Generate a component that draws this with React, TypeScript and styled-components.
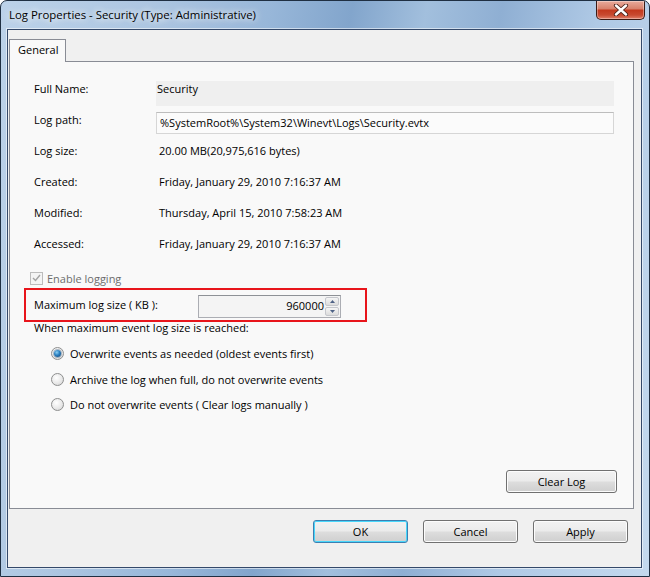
import React from "react";
import styled, { createGlobalStyle } from "styled-components";

const GlobalStyle = createGlobalStyle`
  html, body {
    margin: 0;
    padding: 0;
    background: #ffffff;
  }
  body {
    font-family: "Segoe UI", "Open Sans", "Noto Sans", sans-serif;
    font-size: 11px;
    color: #000000;
  }
  * {
    box-sizing: border-box;
  }
`;

const Window = styled.div`
  width: 650px;
  height: 577px;
  display: flex;
  flex-direction: column;
  border: 1px solid #1f2f42;
  border-radius: 7px 7px 0 0;
  overflow: hidden;
  background: linear-gradient(
    100deg,
    #bcd2e9 0%,
    #adc6e1 20%,
    #98b7d9 36%,
    #82a5cc 47%,
    #a2bfdd 57%,
    #8fafd3 67%,
    #afc9e5 80%,
    #c4d9ee 100%
  );
`;

const TitleBar = styled.div`
  height: 28px;
  display: flex;
  align-items: flex-start;
  flex-shrink: 0;
`;

const Title = styled.div`
  flex: 1;
  padding: 6px 0 0 8px;
  font-size: 11.4px;
  line-height: 16px;
  color: #000000;
  text-shadow: 0 0 6px rgba(255, 255, 255, 0.95), 0 0 10px rgba(255, 255, 255, 0.8);
`;

const CloseButton = styled.div`
  width: 49px;
  height: 19px;
  margin-right: 4px;
  display: flex;
  align-items: center;
  justify-content: center;
  border: 1px solid #3b1a14;
  border-top: none;
  border-radius: 0 0 5px 5px;
  background: linear-gradient(
    180deg,
    #e8ab9c 0%,
    #d8826d 42%,
    #c3391e 52%,
    #c84a30 78%,
    #e0806a 100%
  );
  box-shadow: inset 0 0 0 1px rgba(255, 255, 255, 0.35);
`;

const Client = styled.div`
  flex: 1;
  margin: 0 7px 8px 6px;
  display: flex;
  flex-direction: column;
  padding: 9px 7px 0 1px;
  background: #f0f0f0;
  border: 1px solid #34496a;
  box-shadow: 0 0 0 1px rgba(255, 255, 255, 0.55);
`;

const TabStrip = styled.div`
  display: flex;
  height: 22px;
  flex-shrink: 0;
`;

const Tab = styled.div`
  position: relative;
  z-index: 1;
  height: 23px;
  padding: 2px 7px 0 8px;
  line-height: 16px;
  background: #f9f9f9;
  border: 1px solid #898c95;
  border-bottom: none;
`;

const Panel = styled.div`
  flex: 1;
  display: flex;
  flex-direction: column;
  padding: 18px 16px 15px 24px;
  background: #f9f9f9;
  border: 1px solid #898c95;
`;

const Fields = styled.div`
  padding-right: 3px;
`;

const Row = styled.div`
  display: grid;
  grid-template-columns: 122px 1fr;
  align-items: start;
  height: 31px;
`;

const Label = styled.div`
  line-height: 18px;
  white-space: nowrap;
`;

const PlainValue = styled.div`
  padding-left: 3px;
  line-height: 18px;
  white-space: nowrap;
`;

const ReadonlyBox = styled.div`
  margin-top: 1px;
  height: 25px;
  padding: 0 1px;
  line-height: 16px;
  background: #efefef;
`;

const PathBox = styled.div`
  margin-top: 1px;
  height: 22px;
  padding: 0 3px;
  line-height: 20px;
  background: #fbfbfb;
  border: 1px solid #d6d6d6;
  border-top-color: #bdbdbd;
  white-space: nowrap;
`;

const CheckRow = styled.div`
  display: flex;
  align-items: center;
  gap: 4px;
  margin: 3px 0 0 -4px;
  height: 18px;
  color: #6d6d6d;
`;

const CheckBox = styled.div`
  width: 13px;
  height: 13px;
  display: flex;
  align-items: center;
  justify-content: center;
  border: 1px solid #bcbcbc;
  background: #f4f4f4;
`;

const Highlight = styled.div`
  margin: 1px 0 0 -10px;
  width: 343px;
  height: 34px;
  padding-left: 8px;
  display: grid;
  grid-template-columns: 164px 143px;
  align-items: center;
  border: 2px solid #e8151b;
`;

const Spinner = styled.div`
  height: 23px;
  margin-top: 3px;
  display: flex;
  border: 1px solid #abadb3;
  border-top-color: #8e9196;
  background: #f4f4f4;
`;

const SpinValue = styled.div`
  flex: 1;
  text-align: right;
  padding-right: 1px;
  line-height: 20px;
`;

const SpinButtons = styled.div`
  width: 15px;
  display: flex;
  flex-direction: column;
  padding: 1px 1px 1px 0;
  gap: 1px;
`;

const SpinButton = styled.div`
  flex: 1;
  display: flex;
  align-items: center;
  justify-content: center;
  border: 1px solid #c5c7cc;
  border-radius: 2px;
  background: linear-gradient(180deg, #f6f6f6 0%, #e8e8e8 50%, #dcdcdc 100%);
`;

const Caption = styled.div`
  line-height: 12px;
`;

const RadioGroup = styled.div`
  margin-top: 7px;
  padding-left: 17px;
`;

const RadioRow = styled.div`
  display: flex;
  align-items: center;
  gap: 6px;
  height: 25.5px;
`;

const Radio = styled.div<{ $checked?: boolean }>`
  width: 13px;
  height: 13px;
  border-radius: 50%;
  display: flex;
  align-items: center;
  justify-content: center;
  border: 1px solid #8e8f8f;
  background: radial-gradient(circle at 40% 35%, #ffffff 0%, #e9e9e9 55%, #cfcfcf 100%);

  &::after {
    content: "";
    display: ${(p) => (p.$checked ? "block" : "none")};
    width: 7px;
    height: 7px;
    border-radius: 50%;
    background: radial-gradient(circle at 40% 35%, #8ad0f5 0%, #2a7fc0 45%, #0f3f6e 100%);
    box-shadow: 0 0 0 1px rgba(30, 70, 110, 0.35);
  }
`;

const PanelFooter = styled.div`
  margin-top: auto;
  display: flex;
  justify-content: flex-end;
`;

const Button = styled.div<{ $width?: number; $default?: boolean }>`
  width: ${(p) => p.$width ?? 95}px;
  height: 23px;
  display: flex;
  align-items: center;
  justify-content: center;
  line-height: 16px;
  border: 1px solid ${(p) => (p.$default ? "#3c7fb1" : "#707070")};
  border-radius: 3px;
  background: linear-gradient(
    180deg,
    #f2f2f2 0%,
    #ebebeb 48%,
    #dddddd 52%,
    #cfcfcf 100%
  );
  box-shadow: inset 0 0 0 1px ${(p) => (p.$default ? "#48d7fb" : "#fcfcfc")};
`;

const ButtonRow = styled.div`
  height: 58px;
  flex-shrink: 0;
  display: flex;
  justify-content: flex-end;
  align-items: flex-start;
  gap: 15px;
  padding: 11px 6px 0 0;
`;

const fields: [string, string][] = [
  ["Log size:", "20.00 MB(20,975,616 bytes)"],
  ["Created:", "Friday, January 29, 2010 7:16:37 AM"],
  ["Modified:", "Thursday, April 15, 2010 7:58:23 AM"],
  ["Accessed:", "Friday, January 29, 2010 7:16:37 AM"],
];

const radios = [
  { label: "Overwrite events as needed (oldest events first)", checked: true },
  { label: "Archive the log when full, do not overwrite events", checked: false },
  { label: "Do not overwrite events ( Clear logs manually )", checked: false },
];

const CloseGlyph = () => (
  <svg width="16" height="12" viewBox="0 0 16 12">
    <path d="M3 1.5 L13 10.5 M13 1.5 L3 10.5" stroke="#4a2119" strokeWidth="4.2" strokeLinecap="round" />
    <path d="M3 1.5 L13 10.5 M13 1.5 L3 10.5" stroke="#ffffff" strokeWidth="2.4" strokeLinecap="round" />
  </svg>
);

const Arrow = ({ up }: { up?: boolean }) => (
  <svg width="5" height="3" viewBox="0 0 5 3">
    <path d={up ? "M0 3 L2.5 0 L5 3 Z" : "M0 0 L2.5 3 L5 0 Z"} fill="#4d6185" />
  </svg>
);

const App: React.FC = () => {
  return (
    <>
      <GlobalStyle />
      <Window>
        <TitleBar>
          <Title>Log Properties - Security (Type: Administrative)</Title>
          <CloseButton>
            <CloseGlyph />
          </CloseButton>
        </TitleBar>
        <Client>
          <TabStrip>
            <Tab>General</Tab>
          </TabStrip>
          <Panel>
            <Fields>
              <Row>
                <Label>Full Name:</Label>
                <ReadonlyBox>Security</ReadonlyBox>
              </Row>
              <Row>
                <Label>Log path:</Label>
                <PathBox>%SystemRoot%\System32\Winevt\Logs\Security.evtx</PathBox>
              </Row>
              {fields.map(([label, value]) => (
                <Row key={label}>
                  <Label>{label}</Label>
                  <PlainValue>{value}</PlainValue>
                </Row>
              ))}
            </Fields>
            <CheckRow>
              <CheckBox>
                <svg width="9" height="8" viewBox="0 0 9 8">
                  <path d="M1 4 L3.5 6.5 L8 1" stroke="#a3a3a3" strokeWidth="1.4" fill="none" />
                </svg>
              </CheckBox>
              <span>Enable logging</span>
            </CheckRow>
            <Highlight>
              <Label>Maximum log size ( KB ):</Label>
              <Spinner>
                <SpinValue>960000</SpinValue>
                <SpinButtons>
                  <SpinButton>
                    <Arrow up />
                  </SpinButton>
                  <SpinButton>
                    <Arrow />
                  </SpinButton>
                </SpinButtons>
              </Spinner>
            </Highlight>
            <Caption>When maximum event log size is reached:</Caption>
            <RadioGroup>
              {radios.map((r) => (
                <RadioRow key={r.label}>
                  <Radio $checked={r.checked} />
                  <span>{r.label}</span>
                </RadioRow>
              ))}
            </RadioGroup>
            <PanelFooter>
              <Button $width={111}>Clear Log</Button>
            </PanelFooter>
          </Panel>
          <ButtonRow>
            <Button $default>OK</Button>
            <Button>Cancel</Button>
            <Button>Apply</Button>
          </ButtonRow>
        </Client>
      </Window>
    </>
  );
};

export default App;
